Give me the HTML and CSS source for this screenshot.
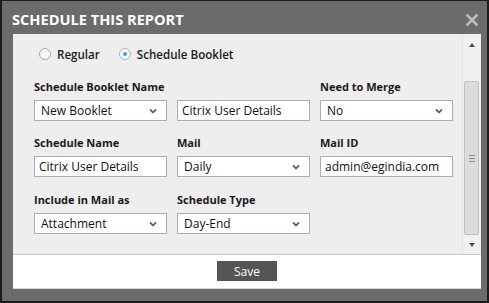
FILE: index.html
```html
<!DOCTYPE html>
<html>
<head>
<meta charset="utf-8">
<link rel="stylesheet" href="styles.css">
</head>
<body>
<div class="dialog">
  <div class="titlebar">
    <span class="title">SCHEDULE THIS REPORT</span>
    <svg class="close" width="12" height="12" viewBox="0 0 12 12"><path d="M1.5 1.5 L10.5 10.5 M10.5 1.5 L1.5 10.5" stroke="#bdbdbd" stroke-width="2.6" stroke-linecap="square"/></svg>
  </div>
  <div class="panel">
    <div class="body">
      <div class="form">
        <div class="radios">
          <label class="radio"><span class="dot"></span>Regular</label>
          <label class="radio"><span class="dot checked"></span>Schedule Booklet</label>
        </div>
        <div class="grid">
          <div class="field">
            <div class="label">Schedule Booklet Name</div>
            <div class="select"><span>New Booklet</span><svg class="chev" width="8" height="6" viewBox="0 0 8 6"><path d="M1 1.5 L4 4.5 L7 1.5" fill="none" stroke="#666" stroke-width="1.8"/></svg></div>
          </div>
          <div class="field">
            <div class="label">&nbsp;</div>
            <div class="input">Citrix User Details</div>
          </div>
          <div class="field">
            <div class="label">Need to Merge</div>
            <div class="select"><span>No</span><svg class="chev" width="8" height="6" viewBox="0 0 8 6"><path d="M1 1.5 L4 4.5 L7 1.5" fill="none" stroke="#666" stroke-width="1.8"/></svg></div>
          </div>
          <div class="field">
            <div class="label">Schedule Name</div>
            <div class="input">Citrix User Details</div>
          </div>
          <div class="field">
            <div class="label">Mail</div>
            <div class="select"><span>Daily</span><svg class="chev" width="8" height="6" viewBox="0 0 8 6"><path d="M1 1.5 L4 4.5 L7 1.5" fill="none" stroke="#666" stroke-width="1.8"/></svg></div>
          </div>
          <div class="field">
            <div class="label">Mail ID</div>
            <div class="input">admin@egindia.com</div>
          </div>
          <div class="field row3">
            <div class="label">Include in Mail as</div>
            <div class="select"><span>Attachment</span><svg class="chev" width="8" height="6" viewBox="0 0 8 6"><path d="M1 1.5 L4 4.5 L7 1.5" fill="none" stroke="#666" stroke-width="1.8"/></svg></div>
          </div>
          <div class="field row3">
            <div class="label">Schedule Type</div>
            <div class="select"><span>Day-End</span><svg class="chev" width="8" height="6" viewBox="0 0 8 6"><path d="M1 1.5 L4 4.5 L7 1.5" fill="none" stroke="#666" stroke-width="1.8"/></svg></div>
          </div>
        </div>
      </div>
      <div class="scrollbar">
        <div class="arrow up"></div>
        <div class="track">
          <div class="thumb"><div class="grip"></div></div>
        </div>
        <div class="arrow down"></div>
      </div>
    </div>
    <div class="footer">
      <button class="save">Save</button>
    </div>
  </div>
</div>
</body>
</html>
```
FILE: styles.css
```css
html, body {
  margin: 0;
  padding: 0;
  background: #1c1c1c;
  font-family: "Open Sans", "Noto Sans", sans-serif;
}
.dialog {
  margin: 1px 2px 0 2px;
  width: 485px;
  height: 300px;
  background: #6b6b6b;
  box-sizing: border-box;
  padding: 0 6px 12px 11px;
  display: flex;
  flex-direction: column;
}
.titlebar {
  height: 33px;
  display: flex;
  align-items: center;
  justify-content: space-between;
}
.title {
  color: #ffffff;
  font-weight: 700;
  font-size: 14.6px;
  margin-left: -1px;
  margin-top: 3px;
}
.close {
  margin-right: 3px;
  margin-top: 4px;
}
.panel {
  flex: 1;
  display: flex;
  flex-direction: column;
  background: #fff;
}
.body {
  height: 220px;
  display: flex;
  background: #eeeeee;
  border-bottom: 1px solid #c9c9c9;
}
.form {
  flex: 1;
  padding: 12px 0 0 21px;
}
.radios {
  display: flex;
  gap: 19px;
  height: 16px;
  align-items: center;
  padding-left: 5px;
  margin-bottom: 17px;
}
.radio {
  display: flex;
  align-items: center;
  gap: 6px;
  font-size: 11.6px;
  font-weight: 600;
  color: #1a1a1a;
}
.dot {
  width: 10px;
  height: 10px;
  border-radius: 50%;
  border: 1px solid #a5a5a5;
  background: #f8f8f8;
  display: inline-flex;
  align-items: center;
  justify-content: center;
}
.dot.checked {
  border-color: #9cb6cc;
}
.dot.checked::after {
  content: "";
  width: 4px;
  height: 4px;
  border-radius: 50%;
  background: #3aa0dc;
}
.grid {
  display: grid;
  grid-template-columns: 133px 133px 133px;
  column-gap: 10px;
  row-gap: 14px;
}
.row3 {
  margin-top: 1px;
}
.label {
  font-size: 11px;
  font-weight: 700;
  color: #1a1a1a;
  line-height: 16px;
  height: 16px;
  margin-bottom: 5px;
  white-space: nowrap;
}
.select, .input {
  height: 21px;
  box-sizing: border-box;
  border: 1px solid #a9aebd;
  background: #fff;
  font-size: 12px;
  color: #111;
  display: flex;
  align-items: center;
}
.select {
  padding: 0 9px 0 6px;
  justify-content: space-between;
}
.input {
  padding: 0 4px;
}
.chev {
  display: block;
}
.scrollbar {
  width: 17px;
  margin-right: 1px;
  background: #f0f0f0;
  border-left: 1px solid #e4e4e4;
  display: flex;
  flex-direction: column;
}
.arrow {
  height: 17px;
  display: flex;
  align-items: center;
  justify-content: center;
}
.arrow::after {
  content: "";
  width: 0;
  height: 0;
  border-left: 3.5px solid transparent;
  border-right: 3.5px solid transparent;
}
.arrow.up::after {
  border-bottom: 4px solid #505050;
  margin-top: 4px;
}
.arrow.down::after {
  border-top: 4px solid #505050;
  margin-top: -2px;
}
.track {
  flex: 1;
  padding: 30px 0 2px 0;
  display: flex;
}
.thumb {
  flex: 1;
  margin: 0 1px;
  background: #dcdcdc;
  border: 1px solid #c2c2c2;
  border-radius: 2px;
  display: flex;
  align-items: center;
  justify-content: center;
}
.grip {
  width: 6px;
  height: 5px;
  border-top: 1px solid #888;
  border-bottom: 1px solid #888;
  background: linear-gradient(#888, #888) center / 100% 1px no-repeat;
}
.footer {
  flex: 1;
  display: flex;
  align-items: center;
  justify-content: center;
  border-bottom: 1px solid #d6d6d6;
}
.save {
  width: 60px;
  height: 20px;
  background: #555555;
  color: #fff;
  border: none;
  font-family: "Open Sans", "Noto Sans", sans-serif;
  font-size: 12px;
  padding: 0;
  margin-top: -1px;
}
```
